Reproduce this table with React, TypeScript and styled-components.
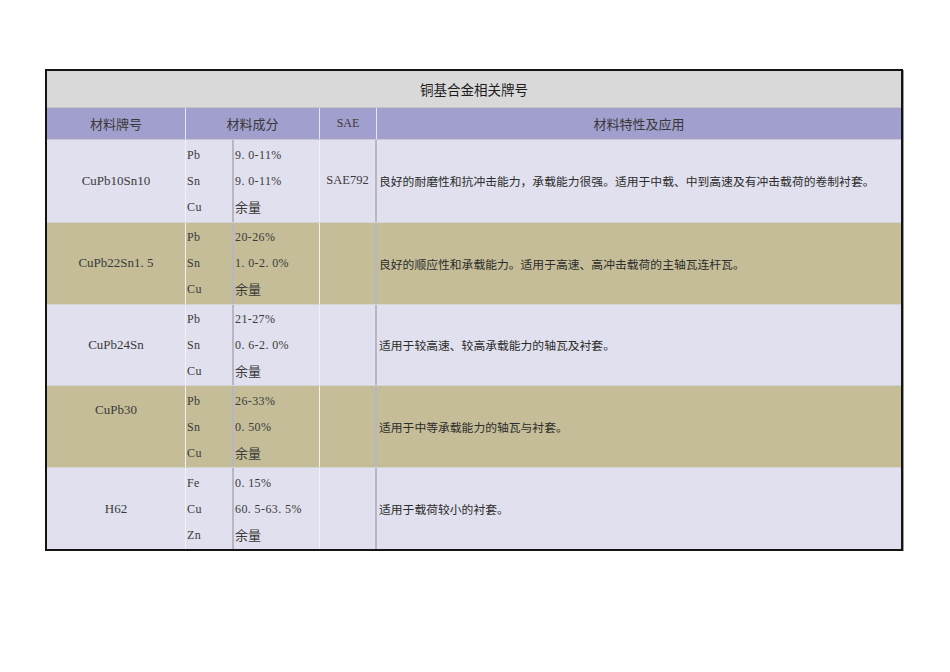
import React from "react";
import styled, { createGlobalStyle, css } from "styled-components";

const GlobalStyle = createGlobalStyle`
  html, body {
    margin: 0;
    padding: 0;
    background: #fff;
  }
  body {
    font-family: "Liberation Serif", "Noto Sans CJK SC", serif;
    color: #333;
  }
`;

const LATIN = `"Liberation Serif", "Noto Sans CJK SC", serif`;
const CJK = `"Noto Sans CJK SC", "Liberation Sans", sans-serif`;

const Page = styled.div`
  padding: 69px 0 0 45px;
`;

const Sheet = styled.div`
  width: 858px;
  box-sizing: border-box;
  border: 2px solid #141414;
  box-shadow: 1px 1px 0 #9a9a9a;
`;

const Title = styled.div`
  height: 37px;
  box-sizing: border-box;
  border-bottom: 1px solid #c4c4c4;
  background: #d9d9d9;
  display: flex;
  align-items: center;
  justify-content: center;
  font-family: ${CJK};
  font-size: 13.5px;
  color: #1e1e1e;
`;

const columns = css`
  display: grid;
  grid-template-columns: 139px 48px 86px 57px 1fr;
`;

const HeaderRow = styled.div`
  ${columns};
  height: 32px;
  box-sizing: border-box;
  border-bottom: 1px solid #c8c8d6;
  background: #a19fce;
`;

const HeadCell = styled.div<{ $span?: number; $last?: boolean }>`
  grid-column: span ${({ $span }) => $span || 1};
  display: flex;
  align-items: center;
  justify-content: center;
  font-family: ${CJK};
  font-size: 13px;
  color: #383838;
  border-right: ${({ $last }) => ($last ? "none" : "1px solid #e6e6f2")};
`;

const HeadLatin = styled.span`
  font-family: ${LATIN};
  font-size: 12px;
`;

const Row = styled.div<{ $tone: "light" | "tan" }>`
  ${columns};
  height: 81.8px;
  box-sizing: border-box;
  border-top: 1px solid #d4d4d4;
  background: ${({ $tone }) => ($tone === "tan" ? "#c4bd97" : "#e0e0ee")};

  &:first-of-type {
    border-top: none;
  }
`;

const NameCell = styled.div<{ $top?: boolean }>`
  display: flex;
  justify-content: center;
  align-items: ${({ $top }) => ($top ? "flex-start" : "center")};
  padding-top: ${({ $top }) => ($top ? "16px" : "0")};
  box-sizing: border-box;
  font-family: ${LATIN};
  font-size: 13px;
  color: #3a3a3a;
  border-right: 1px solid #f2f2f6;
`;

const Lines = styled.div<{ $divider: "soft" | "hard" }>`
  display: flex;
  flex-direction: column;
  justify-content: center;
  padding-left: 1px;
  color: #3a3a3a;
  ${({ $divider }) =>
    $divider === "hard"
      ? css`
          border-right: 2px solid #b6b6c4;
        `
      : css`
          border-right: 1px solid #f2f2f6;
        `};
`;

const Line = styled.div<{ $cjk?: boolean }>`
  height: 26px;
  line-height: 26px;
  white-space: nowrap;
  font-family: ${({ $cjk }) => ($cjk ? CJK : LATIN)};
  font-size: ${({ $cjk }) => ($cjk ? "13px" : "12px")};
  letter-spacing: ${({ $cjk }) => ($cjk ? "0" : "0.4px")};
`;

const SaeCell = styled.div`
  display: flex;
  align-items: center;
  justify-content: center;
  font-family: ${LATIN};
  font-size: 12.5px;
  color: #3a3a3a;
  border-right: 2px solid #b6b6c4;
`;

const Desc = styled.div`
  display: flex;
  align-items: center;
  padding-left: 2px;
  font-family: ${CJK};
  font-size: 11.8px;
  white-space: nowrap;
  color: #2c2c2c;
`;

interface Alloy {
  name: string;
  parts: [string, string][];
  sae: string;
  use: string;
  tone: "light" | "tan";
  top?: boolean;
}

const alloys: Alloy[] = [
  {
    name: "CuPb10Sn10",
    parts: [
      ["Pb", "9. 0-11%"],
      ["Sn", "9. 0-11%"],
      ["Cu", "余量"]
    ],
    sae: "SAE792",
    use: "良好的耐磨性和抗冲击能力，承载能力很强。适用于中载、中到高速及有冲击载荷的卷制衬套。",
    tone: "light"
  },
  {
    name: "CuPb22Sn1. 5",
    parts: [
      ["Pb", "20-26%"],
      ["Sn", "1. 0-2. 0%"],
      ["Cu", "余量"]
    ],
    sae: "",
    use: "良好的顺应性和承载能力。适用于高速、高冲击载荷的主轴瓦连杆瓦。",
    tone: "tan"
  },
  {
    name: "CuPb24Sn",
    parts: [
      ["Pb", "21-27%"],
      ["Sn", "0. 6-2. 0%"],
      ["Cu", "余量"]
    ],
    sae: "",
    use: "适用于较高速、较高承载能力的轴瓦及衬套。",
    tone: "light"
  },
  {
    name: "CuPb30",
    parts: [
      ["Pb", "26-33%"],
      ["Sn", "0. 50%"],
      ["Cu", "余量"]
    ],
    sae: "",
    use: "适用于中等承载能力的轴瓦与衬套。",
    tone: "tan",
    top: true
  },
  {
    name: "H62",
    parts: [
      ["Fe", "0. 15%"],
      ["Cu", "60. 5-63. 5%"],
      ["Zn", "余量"]
    ],
    sae: "",
    use: "适用于载荷较小的衬套。",
    tone: "light"
  }
];

const isCjk = (s: string) => /[\u4e00-\u9fff]/.test(s);

export default function App() {
  return (
    <Page>
      <GlobalStyle />
      <Sheet>
        <Title>铜基合金相关牌号</Title>
        <HeaderRow>
          <HeadCell>材料牌号</HeadCell>
          <HeadCell $span={2}>材料成分</HeadCell>
          <HeadCell>
            <HeadLatin>SAE</HeadLatin>
          </HeadCell>
          <HeadCell $last>材料特性及应用</HeadCell>
        </HeaderRow>
        <div>
          {alloys.map(a => (
            <Row key={a.name} $tone={a.tone}>
              <NameCell $top={a.top}>{a.name}</NameCell>
              <Lines $divider="hard">
                {a.parts.map(([el]) => (
                  <Line key={el}>{el}</Line>
                ))}
              </Lines>
              <Lines $divider="soft">
                {a.parts.map(([el, v]) => (
                  <Line key={el} $cjk={isCjk(v)}>
                    {v}
                  </Line>
                ))}
              </Lines>
              <SaeCell>{a.sae}</SaeCell>
              <Desc>{a.use}</Desc>
            </Row>
          ))}
        </div>
      </Sheet>
    </Page>
  );
}
